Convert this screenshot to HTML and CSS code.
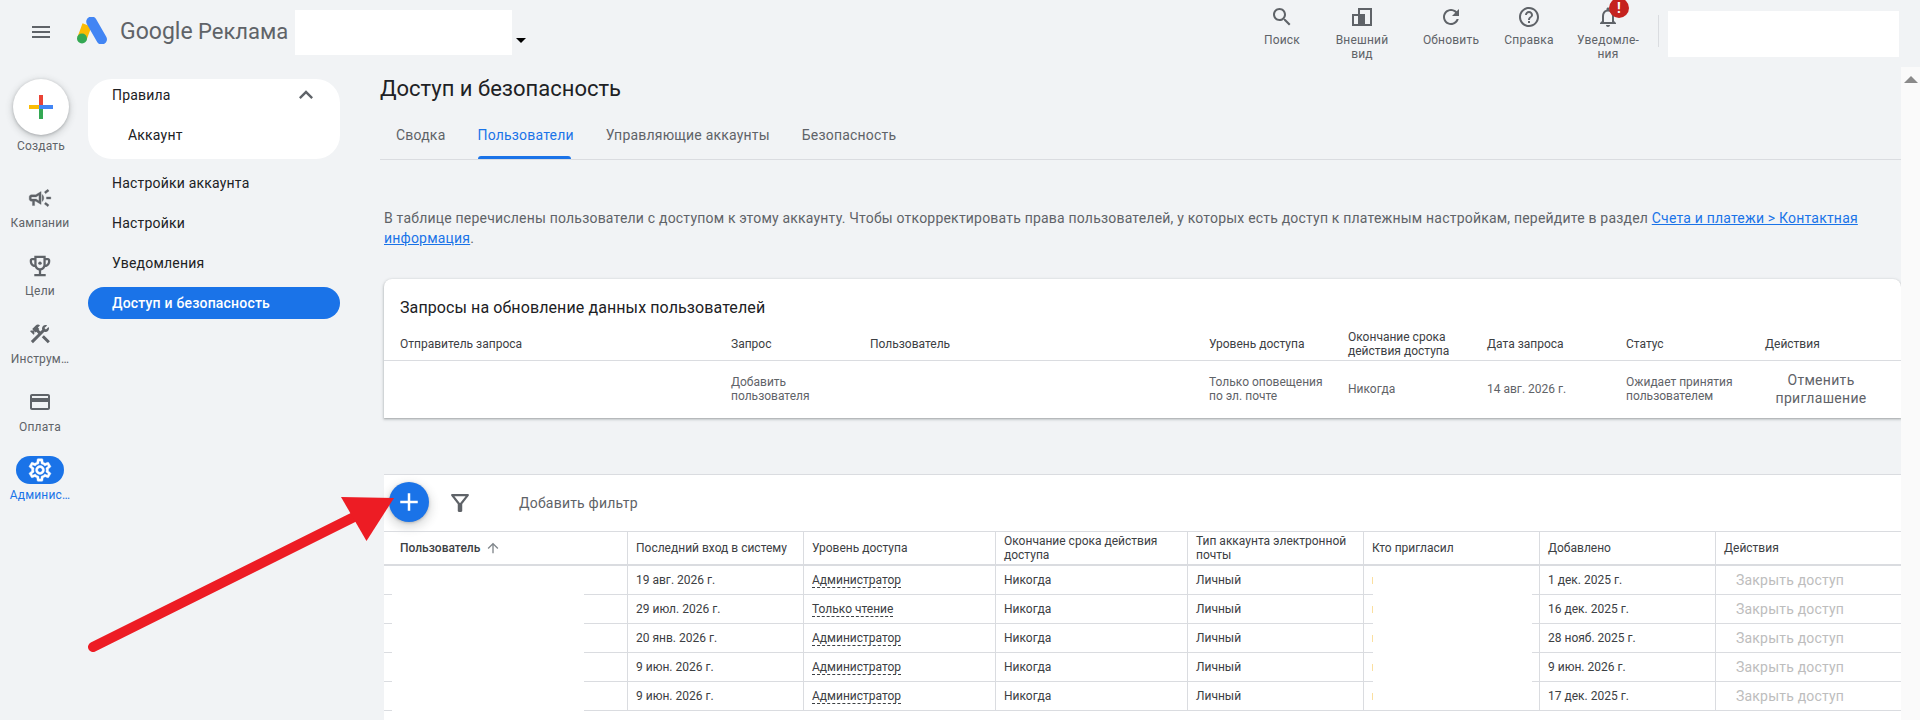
FILE: index.html
```html
<!DOCTYPE html>
<html lang="ru">
<head>
  <meta charset="UTF-8">
  <meta name="viewport" content="width=device-width, initial-scale=1.0">
  <title>Доступ и безопасность</title>
  <link rel="stylesheet" href="styles.css">
</head>
<body>
  <div class="page">
    <header class="topbar">
      <svg class="icon menu-icon" viewBox="0 0 24 24"><path d="M3 18h18v-2H3v2zm0-5h18v-2H3v2zm0-7v2h18V6H3z"/></svg>
      <svg class="ads-logo" viewBox="0 0 30 27">
        <line x1="10" y1="8" x2="5" y2="21.5" stroke="#fbbc04" stroke-width="9.5"/>
        <circle cx="5" cy="21.5" r="5" fill="#34a853"/>
        <line x1="14.5" y1="4.7" x2="24.7" y2="22.3" stroke="#4285f4" stroke-width="10.5" stroke-linecap="round"/>
      </svg>
      <span class="brand"><span class="brand-google">Google</span> Реклама</span>
      <div class="redact-box account-box"></div>
      <span class="caret"></span>

      <div class="actions">
        <div class="action action-1">
          <svg class="icon" viewBox="0 0 24 24"><path d="M15.5 14h-.79l-.28-.27C15.41 12.59 16 11.11 16 9.5 16 5.91 13.09 3 9.5 3S3 5.91 3 9.5 5.91 16 9.5 16c1.61 0 3.09-.59 4.23-1.57l.27.28v.79l5 4.99L20.49 19l-4.99-5zm-6 0C7.01 14 5 11.99 5 9.5S7.01 5 9.5 5 14 7.01 14 9.5 11.99 14 9.5 14z"/></svg>
          <span>Поиск</span>
        </div>
        <div class="action action-2">
          <svg class="icon" viewBox="0 0 24 24"><path fill-rule="evenodd" d="M2 9h6V3h14v18H2z M4 11v8h4v-8z M10 5h10v14h-5V9h-5z"/></svg>
          <span>Внешний вид</span>
        </div>
        <div class="action action-3">
          <svg class="icon" viewBox="0 0 24 24"><path d="M17.65 6.35C16.2 4.9 14.21 4 12 4c-4.42 0-7.99 3.58-7.99 8s3.57 8 7.99 8c3.73 0 6.84-2.55 7.73-6h-2.08c-.82 2.33-3.04 4-5.65 4-3.31 0-6-2.69-6-6s2.69-6 6-6c1.66 0 3.14.69 4.22 1.78L13 11h7V4l-2.35 2.35z"/></svg>
          <span>Обновить</span>
        </div>
        <div class="action action-4">
          <svg class="icon" viewBox="0 0 24 24"><path d="M11 18h2v-2h-2v2zm1-16C6.48 2 2 6.48 2 12s4.48 10 10 10 10-4.48 10-10S17.52 2 12 2zm0 18c-4.41 0-8-3.59-8-8s3.59-8 8-8 8 3.59 8 8-3.59 8-8 8zm0-14c-2.21 0-4 1.79-4 4h2c0-1.1.9-2 2-2s2 .9 2 2c0 2-3 1.75-3 5h2c0-2.25 3-2.5 3-5 0-2.21-1.79-4-4-4z"/></svg>
          <span>Справка</span>
        </div>
        <div class="action action-5">
          <svg class="icon" viewBox="0 0 24 24"><path d="M12 22c1.1 0 2-.9 2-2h-4c0 1.1.9 2 2 2zm6-6v-5c0-3.07-1.63-5.64-4.5-6.32V4c0-.83-.67-1.5-1.5-1.5s-1.5.67-1.5 1.5v.68C7.64 5.36 6 7.92 6 11v5l-2 2v1h16v-1l-2-2zm-2 1H8v-6c0-2.48 1.51-4.5 4-4.5s4 2.02 4 4.5v6z"/></svg>
          <span class="badge">!</span>
          <span>Уведомле-<br>ния</span>
        </div>
      </div>
      <div class="divider"></div>
      <div class="redact-box user-box"></div>
    </header>

    <div class="content">
      <nav class="rail">
        <div class="create">
          <div class="create-btn">
            <svg class="plus" viewBox="0 0 24 24">
              <rect x="10" y="0" width="4" height="10" fill="#ea4335"/>
              <rect x="0" y="10" width="10" height="4" fill="#fbbc04"/>
              <rect x="10" y="14" width="4" height="10" fill="#34a853"/>
              <rect x="10" y="10" width="14" height="4" fill="#4285f4"/>
            </svg>
          </div>
          <span class="rail-label">Создать</span>
        </div>
        <div class="rail-item">
          <svg class="icon icon-campaign" viewBox="0 0 24 24"><path fill-rule="evenodd" d="M18 11v2h4v-2h-4zm-2 6.61c.96.71 2.21 1.65 3.2 2.39.4-.53.8-1.07 1.2-1.6-.99-.74-2.24-1.68-3.2-2.4-.4.54-.8 1.08-1.2 1.61zM20.4 5.6c-.4-.53-.8-1.07-1.2-1.6-.99.74-2.24 1.68-3.2 2.4.4.53.8 1.07 1.2 1.6.96-.72 2.21-1.65 3.2-2.4zM4 9c-1.1 0-2 .9-2 2v2c0 1.1.9 2 2 2h1v4h2v-4h1l5 3V6L8 9H4zm5.03 1.71L11 9.53v4.94l-1.97-1.18-.48-.29H4v-2h4.55l.48-.29zM15.5 12c0-1.33-.58-2.53-1.5-3.35v6.69c.92-.81 1.5-2.01 1.5-3.34z"/></svg>
          <span class="rail-label">Кампании</span>
        </div>
        <div class="rail-item">
          <svg class="icon icon-trophy" viewBox="0 0 24 24"><path d="M19 5h-2V3H7v2H5c-1.1 0-2 .9-2 2v1c0 2.55 1.92 4.63 4.39 4.94.63 1.5 1.98 2.63 3.61 2.96V19H7v2h10v-2h-4v-3.1c1.63-.33 2.98-1.46 3.61-2.96C19.08 12.63 21 10.55 21 8V7c0-1.1-.9-2-2-2zM5 8V7h2v3.82C5.84 10.4 5 9.3 5 8zm7 6c-1.65 0-3-1.35-3-3V5h6v6c0 1.65-1.35 3-3 3zm7-6c0 1.3-.84 2.4-2 2.82V7h2v1z"/><circle cx="12" cy="9.5" r="1.5"/></svg>
          <span class="rail-label">Цели</span>
        </div>
        <div class="rail-item">
          <svg class="icon" viewBox="0 0 24 24"><path d="M13.78 15.3l6 6 2.11-2.16-6-6zM17.5 10c1.93 0 3.5-1.57 3.5-3.5 0-.58-.16-1.12-.41-1.6l-2.7 2.7-1.49-1.49 2.7-2.7c-.48-.25-1.02-.41-1.6-.41C15.57 3 14 4.57 14 6.5c0 .41.08.8.21 1.16l-1.85 1.85-1.78-1.78.71-.71-1.41-1.41L12 3.49c-1.17-1.17-3.07-1.17-4.24 0L4.22 7.03l1.41 1.41H2.81l-.71.71 3.54 3.54.71-.71V9.15l1.41 1.41.71-.71 1.78 1.78-7.41 7.41 2.12 2.12L16.34 9.79c.36.13.75.21 1.16.21z"/></svg>
          <span class="rail-label">Инструм…</span>
        </div>
        <div class="rail-item">
          <svg class="icon" viewBox="0 0 24 24"><path d="M20 4H4c-1.11 0-1.99.89-1.99 2L2 18c0 1.11.89 2 2 2h16c1.11 0 2-.89 2-2V6c0-1.11-.89-2-2-2zm0 14H4v-6h16v6zm0-10H4V6h16v2z"/></svg>
          <span class="rail-label">Оплата</span>
        </div>
        <div class="rail-item active">
          <div class="rail-pill">
            <svg class="icon" viewBox="0 0 24 24"><path d="M19.43 12.98c.04-.32.07-.64.07-.98 0-.34-.03-.66-.07-.98l2.11-1.65c.19-.15.24-.42.12-.64l-2-3.46c-.09-.16-.26-.25-.44-.25-.06 0-.12.01-.17.03l-2.49 1c-.52-.4-1.08-.73-1.69-.98l-.38-2.65C14.46 2.18 14.25 2 14 2h-4c-.25 0-.46.18-.49.42l-.38 2.65c-.61.25-1.17.59-1.69.98l-2.49-1c-.06-.02-.12-.03-.18-.03-.17 0-.34.09-.43.25l-2 3.46c-.13.22-.07.49.12.64l2.11 1.65c-.04.32-.07.65-.07.98 0 .33.03.66.07.98l-2.11 1.65c-.19.15-.24.42-.12.64l2 3.46c.09.16.26.25.44.25.06 0 .12-.01.17-.03l2.49-1c.52.4 1.08.73 1.69.98l.38 2.65c.03.24.24.42.49.42h4c.25 0 .46-.18.49-.42l.38-2.65c.61-.25 1.17-.59 1.69-.98l2.49 1c.06.02.12.03.18.03.17 0 .34-.09.43-.25l2-3.46c.12-.22.07-.49-.12-.64l-2.11-1.65zm-1.98-1.71c.04.31.05.52.05.73 0 .21-.02.43-.05.73l-.14 1.13.89.7 1.08.84-.7 1.21-1.27-.51-1.04-.42-.9.68c-.43.32-.84.56-1.25.73l-1.06.43-.16 1.13-.2 1.35h-1.4l-.19-1.35-.16-1.13-1.06-.43c-.43-.18-.83-.41-1.23-.71l-.91-.7-1.06.43-1.27.51-.7-1.21 1.08-.84.89-.7-.14-1.13c-.03-.31-.05-.54-.05-.74s.02-.43.05-.73l.14-1.13-.89-.7-1.08-.84.7-1.21 1.27.51 1.04.42.9-.68c.43-.32.84-.56 1.25-.73l1.06-.43.16-1.13.2-1.35h1.39l.19 1.35.16 1.13 1.06.43c.43.18.83.41 1.23.71l.91.7 1.06-.43 1.27-.51.7 1.21-1.07.85-.89.7.14 1.13zM12 8c-2.21 0-4 1.79-4 4s1.79 4 4 4 4-1.79 4-4-1.79-4-4-4zm0 6c-1.1 0-2-.9-2-2s.9-2 2-2 2 .9 2 2-.9 2-2 2z"/></svg>
          </div>
          <span class="rail-label">Админис…</span>
        </div>
      </nav>

      <aside class="sidenav">
        <div class="side-group">
          <div class="side-head">
            <span>Правила</span>
            <svg class="icon chevron" viewBox="0 0 24 24"><path d="M12 8l-6 6 1.41 1.41L12 10.83l4.59 4.58L18 14z"/></svg>
          </div>
          <div class="side-sub">Аккаунт</div>
        </div>
        <div class="side-item">Настройки аккаунта</div>
        <div class="side-item">Настройки</div>
        <div class="side-item">Уведомления</div>
        <div class="side-item selected">Доступ и безопасность</div>
      </aside>

      <main class="main">
        <h1 class="page-title">Доступ и безопасность</h1>
        <div class="tabs">
          <div class="tab">Сводка</div>
          <div class="tab current">Пользователи</div>
          <div class="tab">Управляющие аккаунты</div>
          <div class="tab">Безопасность</div>
        </div>

        <p class="intro">В таблице перечислены пользователи с доступом к этому аккаунту. Чтобы откорректировать права пользователей, у которых есть доступ к платежным настройкам, перейдите в раздел <a href="#">Счета и платежи &gt; Контактная информация</a>.</p>

        <section class="card">
          <h2 class="card-title">Запросы на обновление данных пользователей</h2>
          <table class="req-table">
            <thead>
              <tr>
                <th>Отправитель запроса</th>
                <th>Запрос</th>
                <th>Пользователь</th>
                <th>Уровень доступа</th>
                <th>Окончание срока действия доступа</th>
                <th>Дата запроса</th>
                <th>Статус</th>
                <th>Действия</th>
              </tr>
            </thead>
            <tbody>
              <tr>
                <td></td>
                <td>Добавить пользователя</td>
                <td></td>
                <td>Только оповещения по эл. почте</td>
                <td>Никогда</td>
                <td>14 авг. 2026 г.</td>
                <td>Ожидает принятия пользователем</td>
                <td><div class="cancel-btn">Отменить приглашение</div></td>
              </tr>
            </tbody>
          </table>
        </section>

        <section class="users">
          <div class="toolbar">
            <div class="fab">
              <svg class="icon" viewBox="0 0 24 24"><path d="M19 13h-6v6h-2v-6H5v-2h6V5h2v6h6v2z"/></svg>
            </div>
            <svg class="icon funnel" viewBox="0 0 24 24"><path d="M7 6h10l-5.01 6.3L7 6zm-2.75-.39C6.27 8.2 10 13 10 13v6c0 .55.45 1 1 1h2c.55 0 1-.45 1-1v-6s3.72-4.8 5.74-7.39c.51-.66.04-1.61-.79-1.61H5.04c-.83 0-1.3.95-.79 1.61z"/></svg>
            <span class="add-filter">Добавить фильтр</span>
          </div>
          <div class="users-wrap">
            <table class="users-table">
              <thead>
                <tr>
                  <th class="sorted">Пользователь <svg class="sort-arrow" viewBox="0 0 24 24"><path d="M4 12l1.41 1.41L11 7.83V20h2V7.83l5.58 5.59L20 12l-8-8-8 8z"/></svg></th>
                  <th>Последний вход в систему</th>
                  <th>Уровень доступа</th>
                  <th>Окончание срока действия доступа</th>
                  <th>Тип аккаунта электронной почты</th>
                  <th>Кто пригласил</th>
                  <th>Добавлено</th>
                  <th>Действия</th>
                </tr>
              </thead>
              <tbody>
                <tr>
                  <td></td>
                  <td>19 авг. 2026 г.</td>
                  <td><span class="role">Администратор</span></td>
                  <td>Никогда</td>
                  <td>Личный</td>
                  <td><span class="peek"></span></td>
                  <td>1 дек. 2025 г.</td>
                  <td class="revoke">Закрыть доступ</td>
                </tr>
                <tr>
                  <td></td>
                  <td>29 июл. 2026 г.</td>
                  <td><span class="role">Только чтение</span></td>
                  <td>Никогда</td>
                  <td>Личный</td>
                  <td><span class="peek"></span></td>
                  <td>16 дек. 2025 г.</td>
                  <td class="revoke">Закрыть доступ</td>
                </tr>
                <tr>
                  <td></td>
                  <td>20 янв. 2026 г.</td>
                  <td><span class="role">Администратор</span></td>
                  <td>Никогда</td>
                  <td>Личный</td>
                  <td><span class="peek"></span></td>
                  <td>28 нояб. 2025 г.</td>
                  <td class="revoke">Закрыть доступ</td>
                </tr>
                <tr>
                  <td></td>
                  <td>9 июн. 2026 г.</td>
                  <td><span class="role">Администратор</span></td>
                  <td>Никогда</td>
                  <td>Личный</td>
                  <td><span class="peek"></span></td>
                  <td>9 июн. 2026 г.</td>
                  <td class="revoke">Закрыть доступ</td>
                </tr>
                <tr>
                  <td></td>
                  <td>9 июн. 2026 г.</td>
                  <td><span class="role">Администратор</span></td>
                  <td>Никогда</td>
                  <td>Личный</td>
                  <td><span class="peek"></span></td>
                  <td>17 дек. 2025 г.</td>
                  <td class="revoke">Закрыть доступ</td>
                </tr>
              </tbody>
            </table>
            <div class="cover cover-users"></div>
            <div class="cover cover-inviter"></div>
          </div>
        </section>
      </main>

      <div class="scrollbar"><span class="scroll-up"></span></div>
    </div>

    <!-- red annotation arrow pointing at the add button -->
    <svg class="annotation" viewBox="0 0 1920 720">
      <line x1="93" y1="647" x2="358" y2="515" stroke="#ed1c24" stroke-width="10" stroke-linecap="round"/>
      <polygon points="394,498 341,497 366.5,541" fill="#ed1c24"/>
    </svg>
  </div>
</body>
</html>
```

FILE: styles.css
```css
* {
  box-sizing: border-box;
}

body {
  margin: 0;
  background: #f1f3f5;
  font-family: Roboto, "Liberation Sans", sans-serif;
  color: #202124;
}

.page {
  position: relative;
  width: 1920px;
  height: 720px;
  overflow: hidden;
}

.icon {
  display: block;
  width: 24px;
  height: 24px;
  fill: #5f6368;
  flex: none;
}

/* Top bar */
.topbar {
  display: flex;
  height: 67px;
  align-items: flex-start;
}

.menu-icon {
  margin: 20px 0 0 29px;
}

.ads-logo {
  width: 30px;
  height: 27px;
  margin: 17px 0 0 24px;
  flex: none;
}

.brand {
  margin: 17px 0 0 13px;
  font-size: 22px;
  line-height: 30px;
  color: #5f6368;
  white-space: nowrap;
  width: 175px;
  flex: none;
}

.brand-google {
  font-size: 23px;
}

.redact-box {
  background: #fff;
}

.account-box {
  width: 217px;
  height: 45px;
  margin-top: 10px;
  flex: none;
}

.caret {
  width: 0;
  height: 0;
  margin: 38px 0 0 4px;
  border-left: 5px solid transparent;
  border-right: 5px solid transparent;
  border-top: 5px solid #000;
}

.actions {
  display: flex;
  margin-left: auto;
  margin-right: 5px;
}

.action {
  position: relative;
  display: flex;
  flex-direction: column;
  align-items: center;
  padding-top: 5px;
  gap: 4px;
  font-size: 12px;
  line-height: 14px;
  letter-spacing: 0.2px;
  color: #5f6368;
  text-align: center;
}

.action-1 { width: 70px; }
.action-2 { width: 90px; }
.action-3 { width: 88px; }
.action-4 { width: 68px; }
.action-5 { width: 90px; }

.action-2 span {
  width: 60px;
}

.badge {
  position: absolute;
  top: -2px;
  left: 46px;
  width: 20px;
  height: 20px;
  border-radius: 50%;
  background: #c5221f;
  color: #fff;
  font-size: 14px;
  font-weight: 700;
  line-height: 20px;
}

.divider {
  width: 1px;
  height: 32px;
  margin: 15px 9px 0 0;
  background: #dadce0;
  flex: none;
}

.user-box {
  width: 231px;
  height: 46px;
  margin: 11px 21px 0 0;
  flex: none;
}

.content {
  display: flex;
  height: 653px;
}

/* Left rail */
.rail {
  width: 88px;
  padding-top: 12px;
  flex: none;
}

.create {
  display: flex;
  flex-direction: column;
  align-items: center;
  width: 82px;
  margin-bottom: 33px;
}

.create-btn {
  display: flex;
  align-items: center;
  justify-content: center;
  width: 56px;
  height: 56px;
  border-radius: 50%;
  background: #fff;
  box-shadow: 0 1px 3px rgba(60, 64, 67, 0.3), 0 2px 6px 2px rgba(60, 64, 67, 0.15);
}

.plus {
  width: 24px;
  height: 24px;
}

.create .rail-label {
  margin-top: 4px;
}

.rail-item {
  display: flex;
  flex-direction: column;
  align-items: center;
  width: 80px;
  height: 68px;
}

.rail-label {
  display: block;
  margin-top: 6px;
  font-size: 12px;
  line-height: 14px;
  letter-spacing: 0.2px;
  color: #5f6368;
  white-space: nowrap;
}

.icon-campaign {
  transform: scale(1.08);
  stroke: #5f6368;
  stroke-width: 0.3;
}

.icon-trophy {
  transform: scale(1.14);
}

.rail-pill {
  display: flex;
  align-items: center;
  justify-content: center;
  width: 48px;
  height: 28px;
  margin-top: -2px;
  border-radius: 14px;
  background: #1a73e8;
}

.rail-pill .icon {
  fill: #fff;
  stroke: #fff;
  stroke-width: 0.4;
  transform: scale(1.12);
}

.active .rail-label {
  margin-top: 4px;
  color: #1a73e8;
}

/* Section nav */
.sidenav {
  width: 252px;
  padding-top: 12px;
  font-size: 14px;
  letter-spacing: 0.2px;
  flex: none;
}

.side-group {
  height: 80px;
  margin-bottom: 4px;
  border-radius: 24px;
  background: #fff;
}

.side-head {
  display: flex;
  align-items: center;
  justify-content: space-between;
  height: 32px;
  padding: 0 20px 0 24px;
}

.chevron {
  width: 28px;
  height: 28px;
}

.side-sub {
  display: flex;
  align-items: center;
  height: 48px;
  padding-left: 40px;
}

.side-item {
  display: flex;
  align-items: center;
  height: 40px;
  padding-left: 24px;
}

.side-item.selected {
  height: 32px;
  margin-top: 4px;
  border-radius: 16px;
  background: #1a73e8;
  color: #fff;
  font-weight: 500;
}

/* Main column */
.main {
  flex: 1;
  min-width: 0;
  padding: 8px 0 0 40px;
}

.page-title {
  margin: 0;
  font-size: 22px;
  font-weight: 400;
  line-height: 28px;
}

.tabs {
  display: flex;
  height: 47px;
  margin-top: 10px;
  border-bottom: 1px solid #dadce0;
}

.tab {
  position: relative;
  display: flex;
  align-items: center;
  height: 46px;
  padding: 0 16px 2px;
  font-size: 14px;
  letter-spacing: 0.2px;
  color: #5f6368;
}

.tab.current {
  color: #1a73e8;
}

.tab.current::after {
  content: '';
  position: absolute;
  left: 17px;
  right: 19px;
  bottom: 0;
  height: 3px;
  border-radius: 3px 3px 0 0;
  background: #1a73e8;
}

.intro {
  margin: 48px 0 31px 4px;
  font-size: 14px;
  line-height: 20px;
  letter-spacing: 0.2px;
  color: #5f6368;
}

.intro a {
  color: #1a73e8;
}

/* Requests card */
.card {
  height: 139px;
  margin-left: 4px;
  padding-top: 17px;
  border-radius: 8px 8px 0 0;
  background: #fff;
  box-shadow: 0 1px 2px rgba(60, 64, 67, 0.3), 0 1px 3px 1px rgba(60, 64, 67, 0.15);
}

.card-title {
  margin: 0;
  padding-left: 16px;
  font-size: 16px;
  font-weight: 400;
  line-height: 24px;
  letter-spacing: 0.1px;
}

.req-table,
.users-table {
  width: 100%;
  table-layout: fixed;
  border-collapse: separate;
  border-spacing: 0;
  font-size: 12px;
  line-height: 14px;
  color: #3c4043;
}

.req-table th {
  height: 41px;
  padding: 8px 8px 0 0;
  border-bottom: 1px solid #dadce0;
  font-weight: 400;
  text-align: left;
}

.req-table td {
  height: 57px;
  padding: 0 16px 2px 0;
  color: #5f6368;
}

.req-table th:nth-child(1) { width: 347px; padding-left: 16px; }
.req-table th:nth-child(2) { width: 139px; }
.req-table th:nth-child(3) { width: 339px; }
.req-table th:nth-child(n+4) { width: 139px; }
.req-table th:nth-child(8) { width: 136px; }

.req-table td:nth-child(7) {
  padding-right: 8px;
}

.cancel-btn {
  width: 112px;
  font-size: 14px;
  line-height: 18px;
  letter-spacing: 0.3px;
  text-align: center;
  color: #5f6368;
}

/* Users section */
.users {
  height: 246px;
  margin: 56px 0 0 4px;
  border-top: 1px solid #dadce0;
  background: #fff;
}

.toolbar {
  display: flex;
  align-items: center;
  height: 56px;
  padding-left: 5px;
}

.fab {
  display: flex;
  align-items: center;
  justify-content: center;
  width: 40px;
  height: 40px;
  margin-top: -2px;
  border-radius: 50%;
  background: #1a73e8;
  box-shadow: 0 1px 3px rgba(60, 64, 67, 0.3), 0 4px 8px 3px rgba(60, 64, 67, 0.15);
}

.fab .icon {
  width: 30px;
  height: 30px;
  fill: #fff;
}

.funnel {
  margin-left: 19px;
  transform: scale(1.12);
}

.add-filter {
  margin-left: 47px;
  font-size: 14px;
  letter-spacing: 0.2px;
  color: #5f6368;
}

.users-wrap {
  position: relative;
}

.users-table th {
  height: 35px;
  padding: 0 8px;
  border-top: 1px solid #dadce0;
  border-right: 1px solid #dadce0;
  border-bottom: 2px solid #dadce0;
  font-weight: 400;
  text-align: left;
}

.users-table td {
  height: 29px;
  padding: 0 8px;
  border-right: 1px solid #dadce0;
  border-bottom: 1px solid #dadce0;
}

.users-table th:last-child,
.users-table td:last-child {
  border-right: none;
}

.users-table th:nth-child(1) { width: 244px; }
.users-table th:nth-child(2) { width: 176px; }
.users-table th:nth-child(3) { width: 192px; }
.users-table th:nth-child(4) { width: 192px; }
.users-table th:nth-child(5) { width: 176px; }
.users-table th:nth-child(6) { width: 176px; }
.users-table th:nth-child(7) { width: 176px; }

.users-table th.sorted {
  padding-left: 16px;
  font-weight: 500;
  color: #3c4043;
}

.sort-arrow {
  width: 16px;
  height: 16px;
  margin-left: 2px;
  fill: #80868b;
  vertical-align: -4px;
}

.role {
  display: inline-block;
  border-bottom: 1px dashed #3c4043;
}

.peek {
  display: block;
  width: 1px;
  height: 7px;
  background: #fbdf9f;
}

.users-table td.revoke {
  padding-left: 20px;
  font-size: 14px;
  letter-spacing: 0.2px;
  color: #bdbdbd;
}

/* white blocks hiding the e-mail addresses */
.cover {
  position: absolute;
  top: 35px;
  background: #fff;
}

.cover-users {
  left: 8px;
  width: 192px;
  height: 145px;
}

.cover-inviter {
  left: 989px;
  width: 159px;
  height: 144px;
}

.scrollbar {
  display: flex;
  justify-content: center;
  width: 19px;
  padding-top: 9px;
  background: #fafafa;
  flex: none;
}

.scroll-up {
  width: 0;
  height: 0;
  border-left: 7px solid transparent;
  border-right: 7px solid transparent;
  border-bottom: 7px solid #8a8a8a;
}

.annotation {
  position: absolute;
  top: 0;
  left: 0;
  width: 1920px;
  height: 720px;
  pointer-events: none;
}
```
